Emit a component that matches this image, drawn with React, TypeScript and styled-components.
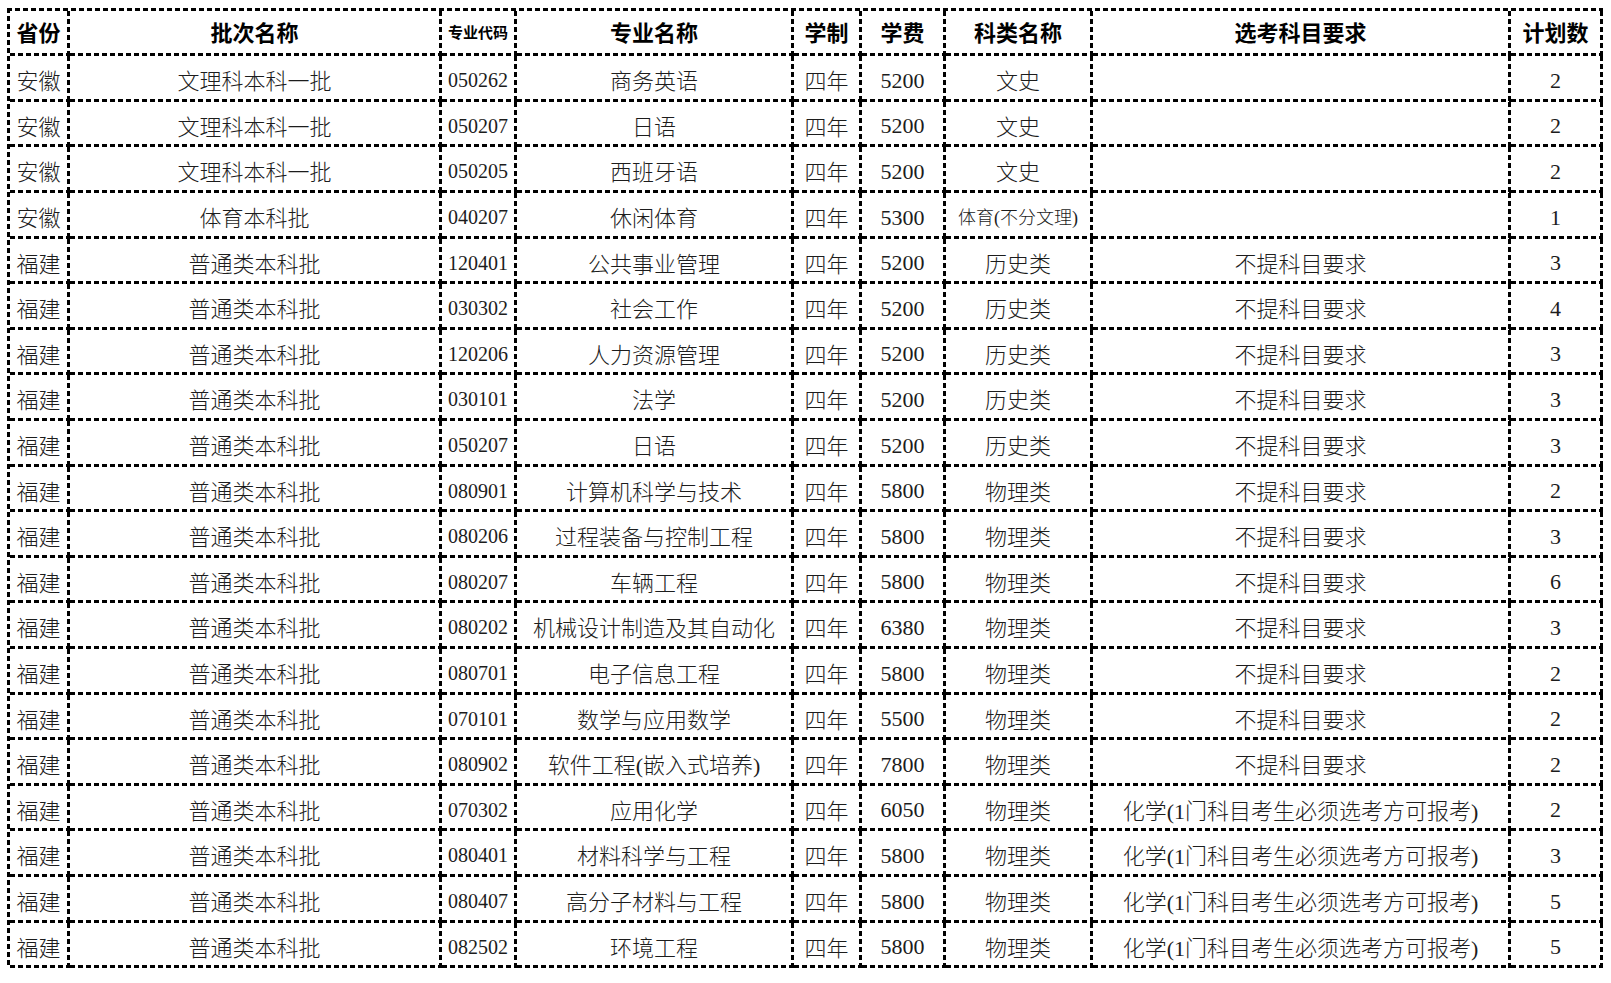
import React from 'react';
import styled, { createGlobalStyle } from 'styled-components';

const GlobalStyle = createGlobalStyle`
    html, body {
        margin: 0;
        padding: 0;
        background: #ffffff;
    }
`;

const columns = [60, 372, 75, 277, 68, 84, 147, 418, 92];

const headers = ['省份', '批次名称', '专业代码', '专业名称', '学制', '学费', '科类名称', '选考科目要求', '计划数'];

const CHEM = '化学(1门科目考生必须选考方可报考)';
const NONE = '不提科目要求';

type Row = [string, string, string, string, string, string, string, string, string];

const rows: Row[] = [
    ['安徽', '文理科本科一批', '050262', '商务英语', '四年', '5200', '文史', '', '2'],
    ['安徽', '文理科本科一批', '050207', '日语', '四年', '5200', '文史', '', '2'],
    ['安徽', '文理科本科一批', '050205', '西班牙语', '四年', '5200', '文史', '', '2'],
    ['安徽', '体育本科批', '040207', '休闲体育', '四年', '5300', '体育(不分文理)', '', '1'],
    ['福建', '普通类本科批', '120401', '公共事业管理', '四年', '5200', '历史类', NONE, '3'],
    ['福建', '普通类本科批', '030302', '社会工作', '四年', '5200', '历史类', NONE, '4'],
    ['福建', '普通类本科批', '120206', '人力资源管理', '四年', '5200', '历史类', NONE, '3'],
    ['福建', '普通类本科批', '030101', '法学', '四年', '5200', '历史类', NONE, '3'],
    ['福建', '普通类本科批', '050207', '日语', '四年', '5200', '历史类', NONE, '3'],
    ['福建', '普通类本科批', '080901', '计算机科学与技术', '四年', '5800', '物理类', NONE, '2'],
    ['福建', '普通类本科批', '080206', '过程装备与控制工程', '四年', '5800', '物理类', NONE, '3'],
    ['福建', '普通类本科批', '080207', '车辆工程', '四年', '5800', '物理类', NONE, '6'],
    ['福建', '普通类本科批', '080202', '机械设计制造及其自动化', '四年', '6380', '物理类', NONE, '3'],
    ['福建', '普通类本科批', '080701', '电子信息工程', '四年', '5800', '物理类', NONE, '2'],
    ['福建', '普通类本科批', '070101', '数学与应用数学', '四年', '5500', '物理类', NONE, '2'],
    ['福建', '普通类本科批', '080902', '软件工程(嵌入式培养)', '四年', '7800', '物理类', NONE, '2'],
    ['福建', '普通类本科批', '070302', '应用化学', '四年', '6050', '物理类', CHEM, '2'],
    ['福建', '普通类本科批', '080401', '材料科学与工程', '四年', '5800', '物理类', CHEM, '3'],
    ['福建', '普通类本科批', '080407', '高分子材料与工程', '四年', '5800', '物理类', CHEM, '5'],
    ['福建', '普通类本科批', '082502', '环境工程', '四年', '5800', '物理类', CHEM, '5'],
];

// row heights kept to whole pixels so the dashed rules stay crisp
const rowHeights = (() => {
    const edges = [11];
    for (let k = 0; k <= rows.length; k++) edges.push(Math.round(54.6 + 45.6 * k + 1.5));
    return edges.slice(1).map((e, i) => e - edges[i]);
})();

// dashed rule: 5px dash, 3px gap, 3px thick
const vDash = 'linear-gradient(to bottom, #000 5px, transparent 5px)';
const hDash = 'linear-gradient(to right, #000 5px, transparent 5px)';

const Page = styled.div`
    padding: 8px 0 0 7px;
`;

const Sheet = styled.div<{ $rows: string }>`
    display: grid;
    grid-template-columns: ${columns.map((c) => `${c}px`).join(' ')};
    grid-template-rows: ${({ $rows }) => $rows};
    width: max-content;
    padding: 3px 0 0 3px;
    background:
        ${vDash} left top / 3px 8px repeat-y,
        ${hDash} left top / 8px 3px repeat-x;
`;

const Cell = styled.div<{ $head?: boolean; $size?: number; $latin?: boolean }>`
    display: flex;
    align-items: center;
    justify-content: center;
    box-sizing: border-box;
    padding: ${({ $head, $latin }) => ($head ? '0 3px 5px 0' : $latin ? '3px 3px 0 0' : '0 3px 0 0')};
    white-space: nowrap;
    overflow: hidden;
    color: ${({ $head }) => ($head ? '#000' : '#1c1c1c')};
    font-family: ${({ $head }) =>
        $head ? '"Noto Sans CJK SC", "Liberation Sans", sans-serif' : '"Liberation Serif", "Noto Sans CJK SC", serif'};
    font-weight: ${({ $head }) => ($head ? 700 : 300)};
    font-size: ${({ $size }) => $size ?? 22}px;
    background:
        ${vDash} right top / 3px 8px repeat-y,
        ${hDash} left bottom / 8px 3px repeat-x;
`;

const sizeFor = (col: number, text: string, head: boolean) => {
    if (col === 2) return head ? 15 : 20;
    if (!head && text.length > 6 && col === 6) return 18;
    return 22;
};

const App = () => {
    return (
        <Page>
            <GlobalStyle />
            <Sheet $rows={rowHeights.map((h) => `${h}px`).join(' ')}>
                {headers.map((h, i) => (
                    <Cell key={`h${i}`} $head $size={sizeFor(i, h, true)}>
                        {h}
                    </Cell>
                ))}
                {rows.map((row, r) =>
                    row.map((text, c) => (
                        <Cell key={`${r}-${c}`} $size={sizeFor(c, text, false)} $latin={/^[\x00-\x7f]+$/.test(text)}>
                            {text}
                        </Cell>
                    ))
                )}
            </Sheet>
        </Page>
    );
};

export default App;
